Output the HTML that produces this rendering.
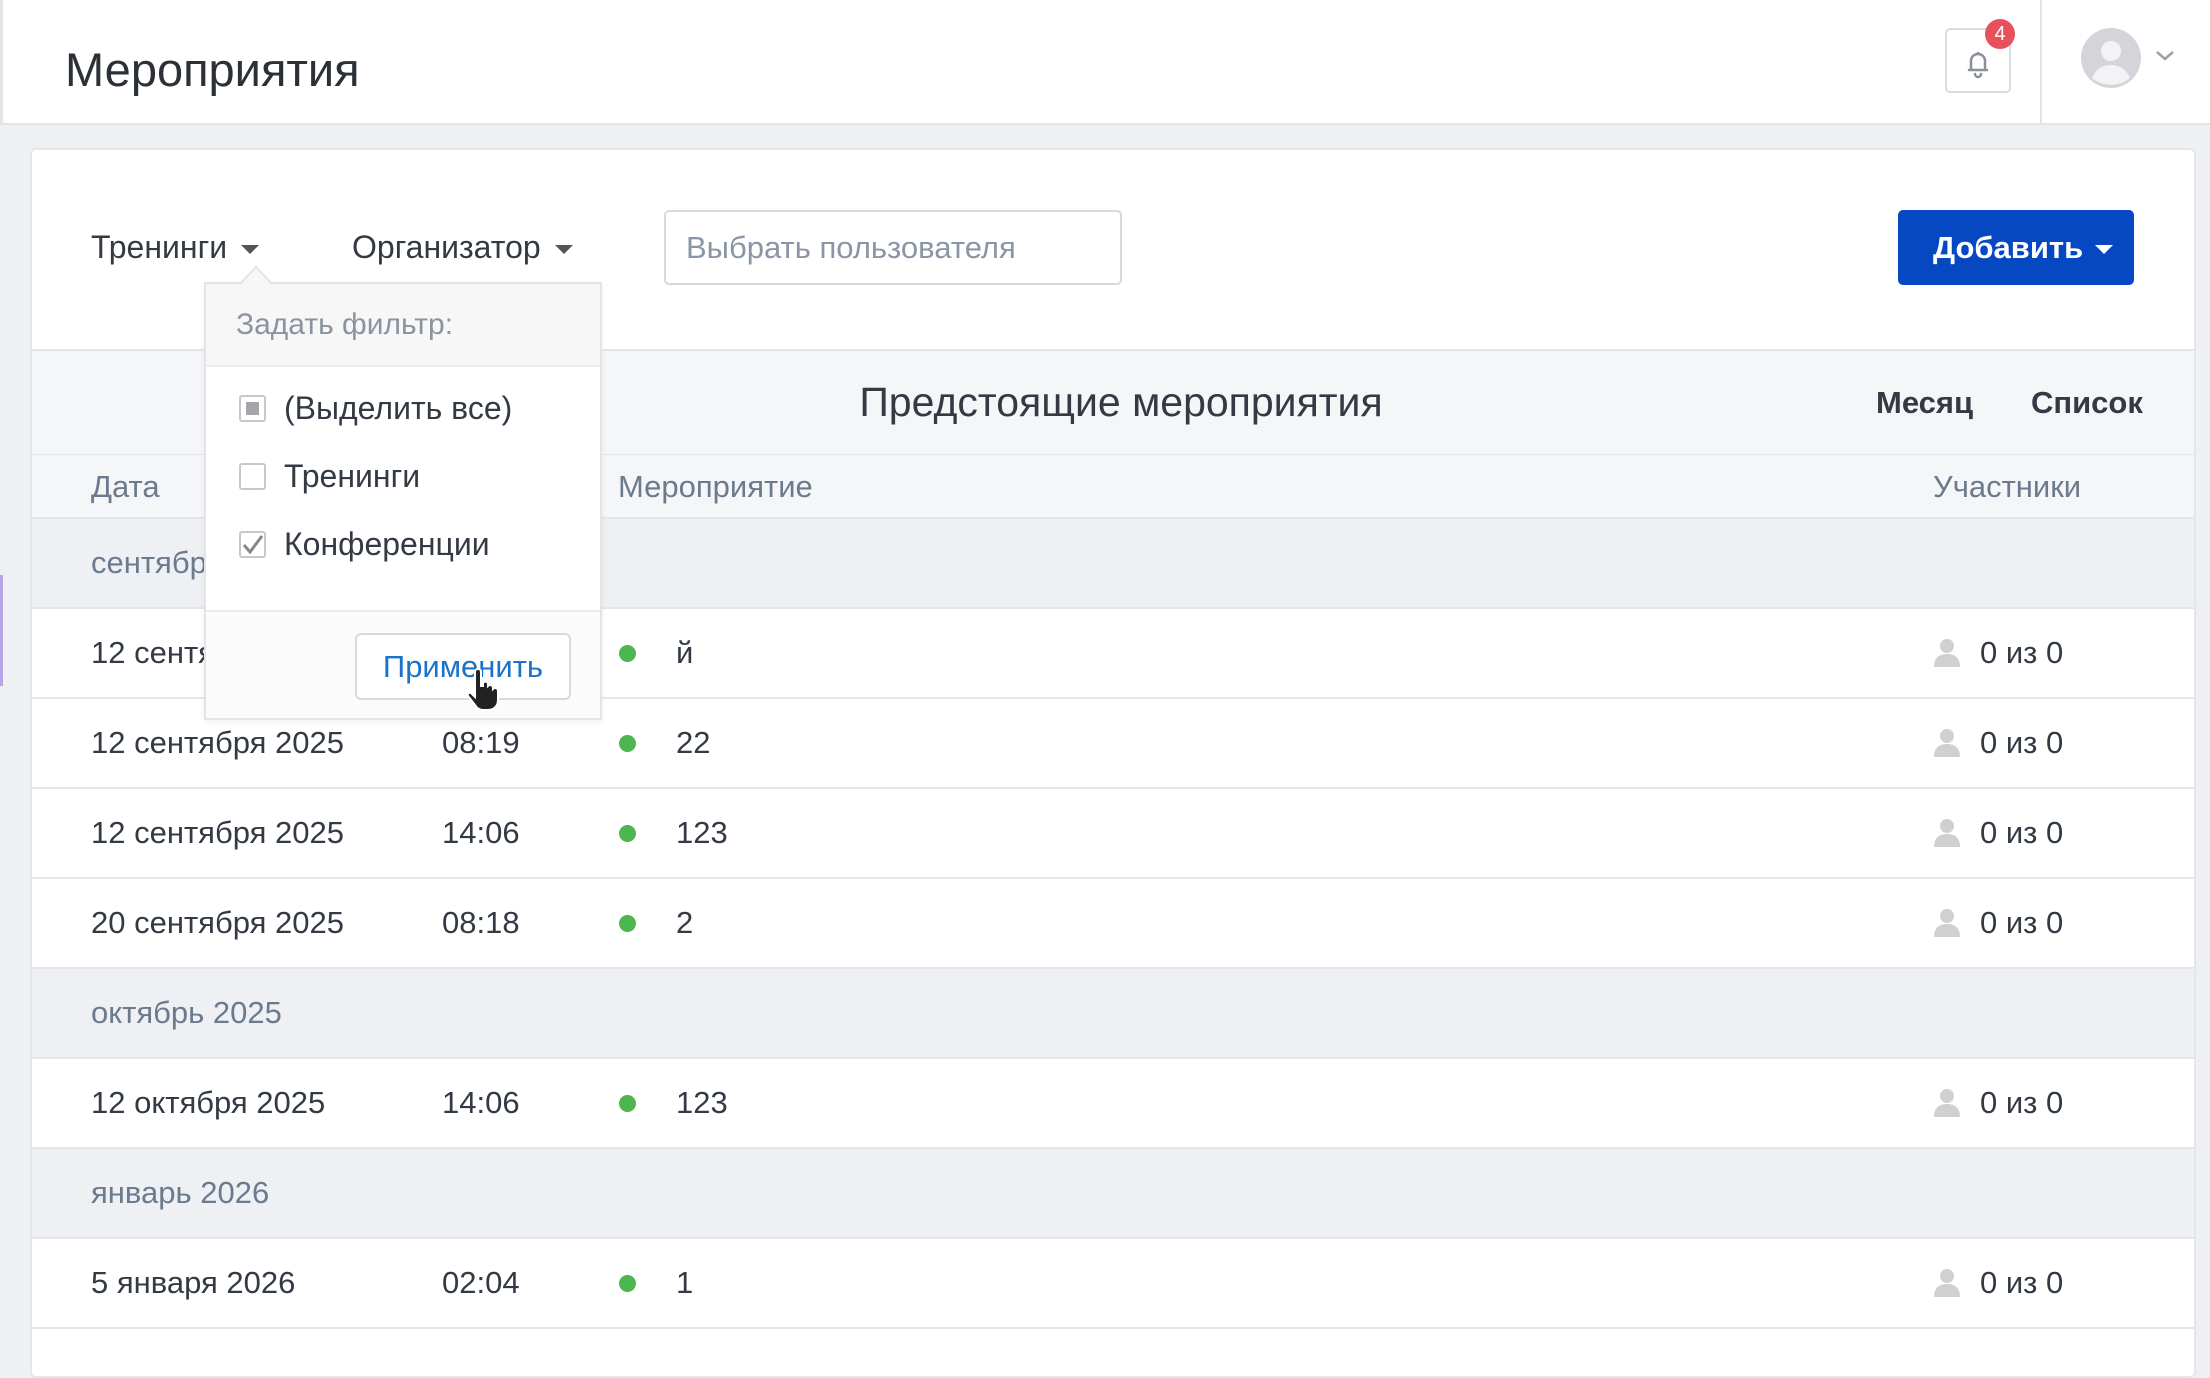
<!DOCTYPE html>
<html><head><meta charset="utf-8"><style>
*{box-sizing:border-box;margin:0;padding:0}
body{width:2210px;height:1350px;overflow:hidden;background:#eef0f3;font-family:"Liberation Sans","DejaVu Sans",sans-serif;color:#333a44;position:relative}
.a{position:absolute;white-space:nowrap}
.hdr{left:0;top:0;width:2210px;height:125px;background:#fff;border-bottom:2px solid #e2e4e8;border-left:3px solid #e2e4e8}
.card{left:30px;top:148px;width:2166px;height:1230px;background:#fff;border:2px solid #e4e6ea;border-radius:6px;overflow:hidden}
.row{left:0;width:2166px;height:90px;border-bottom:2px solid #e4e6ea;font-size:31px;line-height:88px}
.grp{background:#eef0f3;color:#6c7a8e}
.dot{position:absolute;left:587px;top:36px;width:17px;height:17px;border-radius:50%;background:#4cb74f}
.car{display:inline-block;width:0;height:0;border-left:9px solid transparent;border-right:9px solid transparent;border-top:9px solid #555;vertical-align:middle;margin-left:14px}
.cb{position:absolute;left:33px;width:27px;height:27px;border:2px solid #c5c8cc;border-radius:3px;background:#fff}
</style></head><body>
<div class="a hdr"></div>
<div class="a" style="left:65px;top:42px;font-size:47px;color:#2c3138">Мероприятия</div>
<div class="a" style="left:1945px;top:28px;width:66px;height:65px;border:2px solid #d8dbdf;border-radius:5px;background:#fff">
<svg width="62" height="61" viewBox="0 0 62 61"><path d="M22 40h18M24 40v-9a7 7 0 0 1 14 0v9M28 44a3 3 0 0 0 6 0M31 23v1" fill="none" stroke="#8a909a" stroke-width="2.5" stroke-linecap="round"/></svg></div>
<div class="a" style="left:1985px;top:19px;width:30px;height:30px;border-radius:50%;background:#e8505b;color:#fff;font-size:20px;text-align:center;line-height:30px">4</div>
<div class="a" style="left:2040px;top:0;width:2px;height:125px;background:#e2e4e8"></div>
<svg class="a" style="left:2081px;top:28px" width="60" height="60" viewBox="0 0 60 60"><circle cx="30" cy="30" r="30" fill="#d3d5da"/><circle cx="30" cy="23" r="10" fill="#f3f3f5"/><path d="M11 50c4-10 12-13 19-13s15 3 19 13a30 30 0 0 1-38 0z" fill="#f3f3f5"/></svg>
<svg class="a" style="left:2155px;top:50px" width="20" height="12"><path d="M2 2l8 7 8-7" fill="none" stroke="#9aa0a8" stroke-width="2.5"/></svg>

<div class="a" style="left:0;top:575px;width:3px;height:111px;background:#b6a6e8"></div>

<div class="a card">
 <div class="a" style="left:59px;top:77px;font-size:32px;line-height:40px">Тренинги<span class="car"></span></div>
 <div class="a" style="left:320px;top:77px;font-size:32px;line-height:40px">Организатор<span class="car"></span></div>
 <div class="a" style="left:632px;top:60px;width:458px;height:75px;border:2px solid #d6d9dd;border-radius:5px;font-size:31px;color:#8a95a5;line-height:71px;padding-left:20px">Выбрать пользователя</div>
 <div class="a" style="left:1866px;top:60px;width:236px;height:75px;background:#0647c2;border-radius:5px;color:#fff;font-size:31px;font-weight:bold;line-height:75px;padding-left:35px">Добавить<span class="car" style="border-top-color:#fff;margin-left:12px"></span></div>
 <div class="a" style="left:0;top:199px;width:2166px;height:107px;background:#f5f6f8;border-top:2px solid #e4e6ea;border-bottom:2px solid #e4e6ea"></div>
 <div class="a" style="left:0;top:200px;width:2166px;text-align:center;font-size:41px;line-height:105px;padding-left:12px;color:#333a44">Предстоящие мероприятия</div>
 <div class="a" style="left:1844px;top:200px;font-size:31px;line-height:105px;font-weight:600">Месяц</div>
 <div class="a" style="left:1999px;top:200px;font-size:31px;line-height:105px;font-weight:600">Список</div>
 <div class="a" style="left:0;top:305px;width:2166px;height:64px;background:#f5f6f8;border-bottom:2px solid #e4e6ea;font-size:31px;line-height:64px;color:#6c7a8e">
  <span class="a" style="left:59px">Дата</span><span class="a" style="left:586px">Мероприятие</span><span class="a" style="left:1901px">Участники</span></div>

 <div class="a row grp" style="top:369px"><span class="a" style="left:59px">сентябрь 2025</span></div>
 <div class="a row" style="top:459px"><span class="a" style="left:59px">12 сентября 2025</span><span class="a" style="left:410px">08:19</span><i class="dot"></i><span class="a" style="left:644px">й</span><svg class="a" style="left:1902px;top:29px" width="26" height="30"><circle cx="13" cy="8" r="7" fill="#d0d0d0"/><path d="M0 29c0-10 6-13 13-13s13 3 13 13z" fill="#d0d0d0"/></svg><span class="a" style="left:1948px">0 из 0</span></div>
 <div class="a row" style="top:549px"><span class="a" style="left:59px">12 сентября 2025</span><span class="a" style="left:410px">08:19</span><i class="dot"></i><span class="a" style="left:644px">22</span><svg class="a" style="left:1902px;top:29px" width="26" height="30"><circle cx="13" cy="8" r="7" fill="#d0d0d0"/><path d="M0 29c0-10 6-13 13-13s13 3 13 13z" fill="#d0d0d0"/></svg><span class="a" style="left:1948px">0 из 0</span></div>
 <div class="a row" style="top:639px"><span class="a" style="left:59px">12 сентября 2025</span><span class="a" style="left:410px">14:06</span><i class="dot"></i><span class="a" style="left:644px">123</span><svg class="a" style="left:1902px;top:29px" width="26" height="30"><circle cx="13" cy="8" r="7" fill="#d0d0d0"/><path d="M0 29c0-10 6-13 13-13s13 3 13 13z" fill="#d0d0d0"/></svg><span class="a" style="left:1948px">0 из 0</span></div>
 <div class="a row" style="top:729px"><span class="a" style="left:59px">20 сентября 2025</span><span class="a" style="left:410px">08:18</span><i class="dot"></i><span class="a" style="left:644px">2</span><svg class="a" style="left:1902px;top:29px" width="26" height="30"><circle cx="13" cy="8" r="7" fill="#d0d0d0"/><path d="M0 29c0-10 6-13 13-13s13 3 13 13z" fill="#d0d0d0"/></svg><span class="a" style="left:1948px">0 из 0</span></div>
 <div class="a row grp" style="top:819px"><span class="a" style="left:59px">октябрь 2025</span></div>
 <div class="a row" style="top:909px"><span class="a" style="left:59px">12 октября 2025</span><span class="a" style="left:410px">14:06</span><i class="dot"></i><span class="a" style="left:644px">123</span><svg class="a" style="left:1902px;top:29px" width="26" height="30"><circle cx="13" cy="8" r="7" fill="#d0d0d0"/><path d="M0 29c0-10 6-13 13-13s13 3 13 13z" fill="#d0d0d0"/></svg><span class="a" style="left:1948px">0 из 0</span></div>
 <div class="a row grp" style="top:999px"><span class="a" style="left:59px">январь 2026</span></div>
 <div class="a row" style="top:1089px"><span class="a" style="left:59px">5 января 2026</span><span class="a" style="left:410px">02:04</span><i class="dot"></i><span class="a" style="left:644px">1</span><svg class="a" style="left:1902px;top:29px" width="26" height="30"><circle cx="13" cy="8" r="7" fill="#d0d0d0"/><path d="M0 29c0-10 6-13 13-13s13 3 13 13z" fill="#d0d0d0"/></svg><span class="a" style="left:1948px">0 из 0</span></div>
</div>

<!-- dropdown -->
<div class="a" style="left:204px;top:282px;width:398px;height:438px;background:#fff;border:2px solid #e2e4e8;box-shadow:0 2px 6px rgba(0,0,0,.06)">
 <div class="a" style="left:0;top:0;width:394px;height:83px;background:#f7f7f8;border-bottom:2px solid #ececee;font-size:30px;color:#8a93a0;line-height:81px;padding-left:30px">Задать фильтр:</div>
 <div class="cb" style="top:111px"><div style="position:absolute;left:5px;top:5px;width:13px;height:13px;background:#a4a6a9"></div></div>
 <div class="a" style="left:78px;top:104px;font-size:32px;line-height:40px">(Выделить все)</div>
 <div class="cb" style="top:179px"></div>
 <div class="a" style="left:78px;top:172px;font-size:32px;line-height:40px">Тренинги</div>
 <div class="cb" style="top:247px"><svg width="23" height="23" style="position:absolute;left:0;top:0"><path d="M3 12l6 7 12-16" fill="none" stroke="#888" stroke-width="3"/></svg></div>
 <div class="a" style="left:78px;top:240px;font-size:32px;line-height:40px">Конференции</div>
 <div class="a" style="left:0;top:326px;width:394px;height:108px;background:#fbfbfb;border-top:2px solid #ececee"></div>
 <div class="a" style="left:149px;top:349px;width:216px;height:67px;border:2px solid #d6d9dd;border-radius:6px;background:#fff;color:#1a73c8;font-size:31px;text-align:center;line-height:63px">Применить</div>
</div>
<svg class="a" style="left:240px;top:265px" width="32" height="20"><path d="M0 19L16 2l16 17" fill="#f7f7f8" stroke="#e2e4e8" stroke-width="2"/></svg>
<svg class="a" style="left:466px;top:668px" width="36" height="44" viewBox="0 0 36 44"><path d="M9 4a3 3 0 0 1 6 0v14h2v-3a3 3 0 0 1 5 0v3a3 3 0 0 1 5 1v2a3 3 0 0 1 5 1v10c0 6-4 10-10 10h-5c-4 0-6-2-8-5l-7-9c-1-2 1-4 3-3l4 4z" fill="#222" stroke="#fff" stroke-width="2"/></svg>
</body></html>
